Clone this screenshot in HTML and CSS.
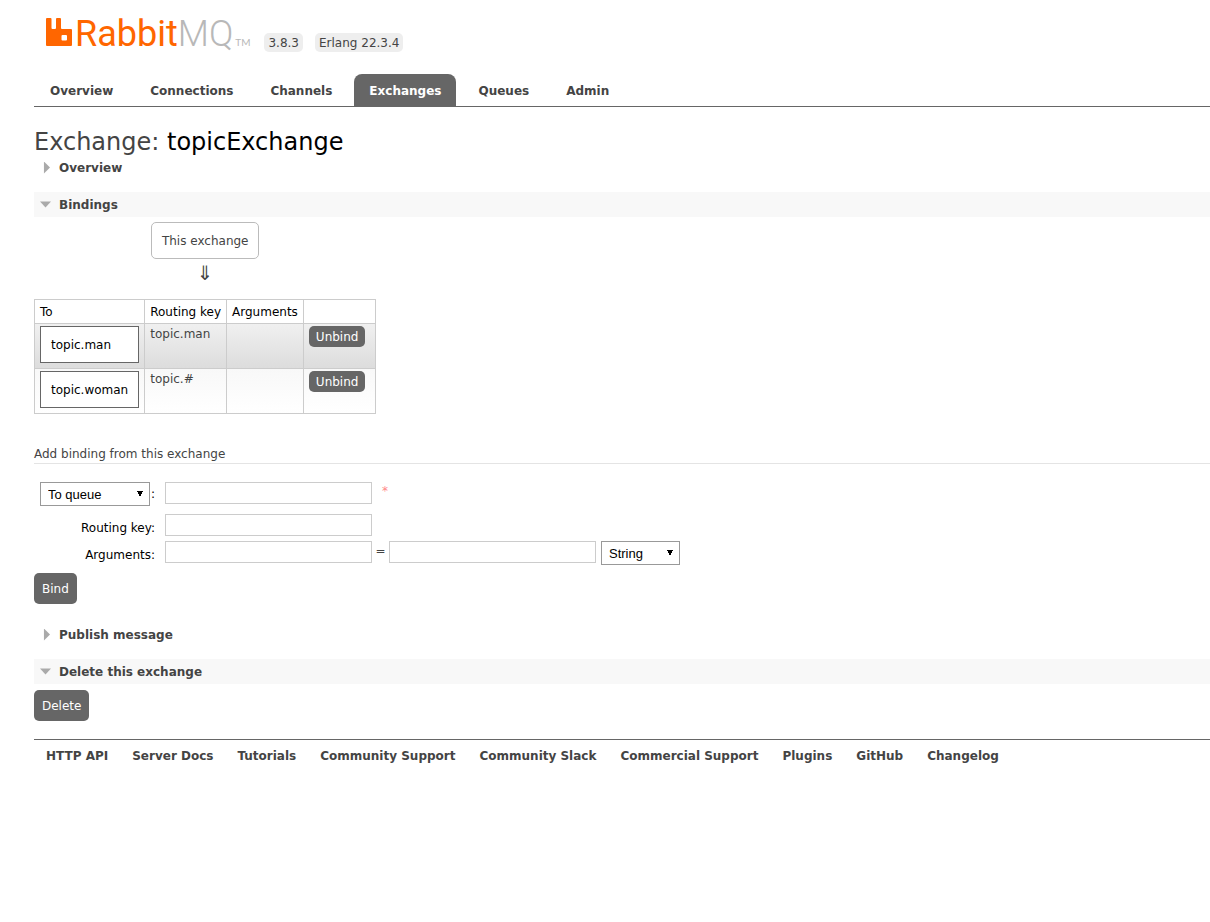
FILE: index.html
```
<!DOCTYPE html>
<html lang="en">
<head>
<meta charset="utf-8">
<title>RabbitMQ Management</title>
<link rel="stylesheet" href="styles.css">
</head>
<body>
<header class="header">
  <div class="brand">
    <a class="logo" href="#" aria-label="RabbitMQ">
      <svg class="logo-mark" viewBox="0 0 26 28" width="26" height="28" aria-hidden="true"><path fill="#f60" fill-rule="evenodd" d="M1 0h3.500q1 0 1 1v9q0 1 1 1h2.500q1 0 1-1V1q0-1 1-1H14q1 0 1 1v9q0 1 1 1h9q1 0 1 1v15q0 1-1 1H1q-1 0-1-1V1q0-1 1-1zM16.500 17q-1 0-1 1v3.500q0 1 1 1H20q1 0 1-1V18q0-1-1-1z"/></svg>
      <span class="logo-rabbit">Rabbit</span><span class="logo-mq">MQ</span><span class="logo-tm">TM</span>
    </a>
    <span class="version">3.8.3</span>
    <span class="version">Erlang 22.3.4</span>
  </div>
  <nav class="tabs">
    <a href="#">Overview</a>
    <a href="#">Connections</a>
    <a href="#">Channels</a>
    <a href="#" class="selected">Exchanges</a>
    <a href="#">Queues</a>
    <a href="#">Admin</a>
  </nav>
</header>

<main class="main">
  <h1>Exchange: <b>topicExchange</b></h1>
  <h2 class="section-title closed">Overview</h2>
  <h2 class="section-title open">Bindings</h2>

  <div class="bindings">
    <span class="exchange">This exchange</span>
    <span class="arrow">&#8659;</span>
    <table class="list">
      <thead>
        <tr><th>To</th><th>Routing key</th><th>Arguments</th><th></th></tr>
      </thead>
      <tbody>
        <tr class="alt"><td><a class="queue" href="#">topic.man</a></td><td>topic.man</td><td></td><td><button class="small" type="button">Unbind</button></td></tr>
        <tr class="plain"><td><a class="queue" href="#">topic.woman</a></td><td>topic.#</td><td></td><td><button class="small" type="button">Unbind</button></td></tr>
      </tbody>
    </table>
  </div>

  <h3>Add binding from this exchange</h3>
  <form class="form">
    <div class="row first">
      <div class="label"><select class="destination" aria-label="Destination type"><option>To queue</option><option>To exchange</option></select>:</div>
      <input type="text" aria-label="Destination">
      <span class="mand">*</span>
    </div>
    <div class="row">
      <label class="label" for="key">Routing key:</label>
      <input type="text" id="key">
    </div>
    <div class="row last">
      <label class="label" for="args">Arguments:</label>
      <input type="text" id="args">
      <span class="equals">=</span>
      <input type="text" aria-label="Argument value">
      <select class="kind" aria-label="Argument type"><option>String</option><option>Number</option></select>
    </div>
    <button type="button">Bind</button>
  </form>

  <h2 class="section-title closed">Publish message</h2>
  <h2 class="section-title open">Delete this exchange</h2>
  <button type="button" class="delete">Delete</button>
</main>

<footer class="footer">
  <a href="#">HTTP API</a>
  <a href="#">Server Docs</a>
  <a href="#">Tutorials</a>
  <a href="#">Community Support</a>
  <a href="#">Community Slack</a>
  <a href="#">Commercial Support</a>
  <a href="#">Plugins</a>
  <a href="#">GitHub</a>
  <a href="#">Changelog</a>
</footer>
</body>
</html>
```
FILE: styles.css
```
* { box-sizing: border-box; }
body {
  margin: 0;
  padding-left: 34px;
  font: 12px/16px Verdana, "DejaVu Sans", sans-serif;
  color: #444;
  background: #fff;
}
a { color: #444; text-decoration: none; }

.header { border-bottom: 1px solid #666; }
.brand {
  display: flex;
  align-items: flex-end;
  gap: 12px;
  height: 52px;
  padding-left: 12px;
}
.logo {
  display: flex;
  align-items: baseline;
  line-height: 36px;
  margin-right: 2px;
  font-family: Roboto, sans-serif;
  font-size: 36px;
  font-weight: 300;
}
.logo-mark { margin-right: 3px; }
.logo-rabbit { color: #f60; font-weight: 400; }
.logo-mq { color: #b8b8b8; }
.logo-tm { margin-left: 2px; font: 10px/12px Lato, sans-serif; color: #b8b8b8; }
.version {
  padding: 2px 4px 1px;
  border-radius: 5px;
  background: #eee;
}

.tabs { display: flex; gap: 7px; margin-top: 22px; padding-left: 1px; }
.tabs a {
  padding: 9px 15px 7px;
  border-radius: 8px 8px 0 0;
  font-weight: bold;
}
.tabs .selected { background: #666; color: #fff; }

h1 {
  margin: 22px 0 0;
  font-size: 24px;
  line-height: 26px;
  font-weight: normal;
}
h1 b { font-weight: normal; color: #000; }

.section-title {
  display: flex;
  align-items: center;
  height: 25px;
  margin: 0 0 12px;
  font-size: 12px;
}
.section-title::before {
  content: "";
  width: 11px;
  height: 12px;
  margin: 0 8px 0 6px;
  background: #aaa;
}
.closed::before { clip-path: polygon(36% 0, 91% 50%, 36% 100%); }
.open::before { clip-path: polygon(0 25%, 100% 25%, 50% 75%); }
.open { background: #f8f8f8; margin-bottom: 5px; }

.bindings {
  display: grid;
  justify-items: center;
  width: max-content;
}
.exchange {
  padding: 11px 10px 9px;
  line-height: 15px;
  border: 1px solid #bbb;
  border-radius: 5px;
}
.arrow { font-size: 20px; line-height: 28px; margin-bottom: 12px; }

.list { border-collapse: collapse; }
.list th, .list td {
  padding: 2px 5px;
  border: 1px solid #ccc;
  text-align: left;
  vertical-align: top;
}
.list th { padding: 4px 5px 3px; font-weight: normal; color: #000; }
.list th:last-child, .list td:last-child { padding-right: 10px; }
.alt { background: linear-gradient(#f0f0f0, #dcdcdc); }
.plain { background: linear-gradient(#f8f8f8, #fff); }
.queue {
  display: block;
  padding: 11px 10px 9px;
  margin-bottom: 3px;
  line-height: 15px;
  border: 1px solid #666;
  background: #fff;
  color: #000;
}

button {
  display: block;
  padding: 8px 8px 7px;
  border: 0;
  border-radius: 5px;
  background: #666;
  color: #fff;
  font: 12px/16px Verdana, "DejaVu Sans", sans-serif;
}
.small { padding: 3px 7px 2px; }

h3 {
  margin: 32px 0 18px;
  padding-bottom: 1px;
  border-bottom: 1px solid #e4e4e4;
  font-size: 12px;
  font-weight: normal;
}
.row { display: flex; align-items: flex-start; height: 27px; }
.first { margin-bottom: 5px; }
.last { margin-bottom: 5px; }
.label {
  width: 121px;
  margin-right: 10px;
  text-align: right;
  line-height: 28px;
  color: #000;
}
.first .label { display: flex; justify-content: flex-end; align-items: center; height: 24px; gap: 1px; }
.row input {
  width: 207px;
  height: 22px;
  padding: 2px;
  border: 1px solid #ccc;
  font: inherit;
}
.mand { margin-left: 10px; line-height: 18px; color: #f88; }
.equals { width: 17px; text-align: center; line-height: 20px; }
select {
  height: 24px;
  padding: 0 22px 0 7px;
  border: 1px solid #999;
  border-radius: 0;
  appearance: none;
  font: 13px "Liberation Sans", Arial, sans-serif;
  color: #000;
  background:
    linear-gradient(to bottom left, #000 50%, transparent 50%) right 9px center / 3px 6px no-repeat,
    linear-gradient(to bottom right, #000 50%, transparent 50%) right 6px center / 3px 6px no-repeat;
  background-color: #fff;
}
.destination { width: 110px; }
.kind { width: 79px; margin-left: 5px; }

.form { margin-bottom: 18px; }
.delete { margin-top: 6px; }
.footer {
  display: flex;
  flex-wrap: wrap;
  gap: 8px 24px;
  margin-top: 18px;
  padding: 8px 12px;
  border-top: 1px solid #666;
  font-weight: bold;
}
```
